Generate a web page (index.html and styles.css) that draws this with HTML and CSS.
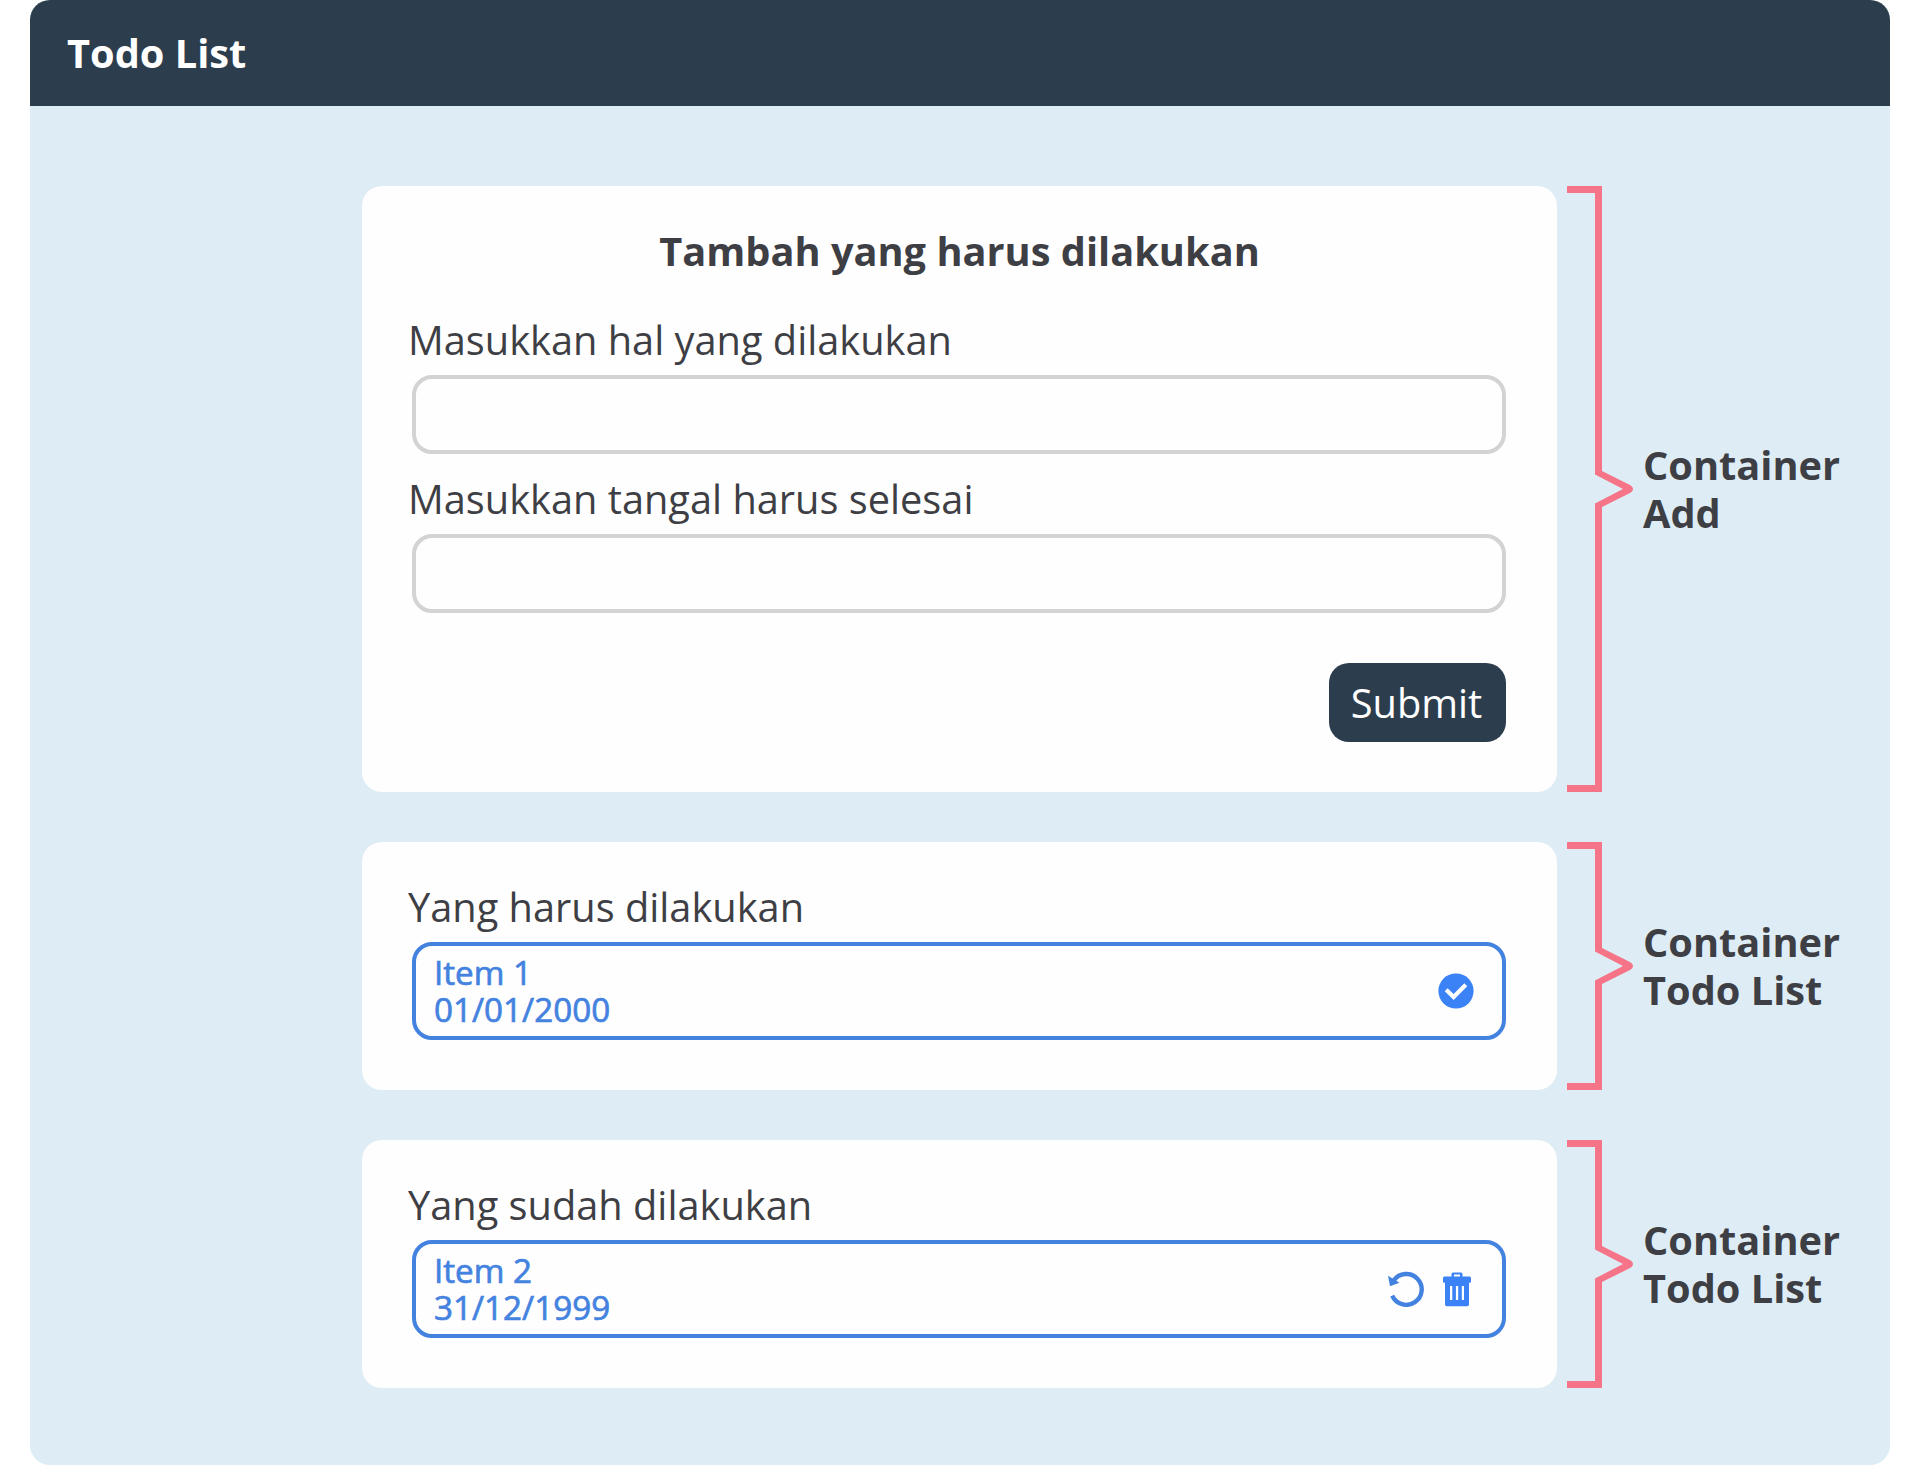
FILE: index.html
```html
<!DOCTYPE html>
<html lang="id">
  <head>
    <meta charset="UTF-8" />
    <meta name="viewport" content="width=device-width, initial-scale=1.0" />
    <title>Todo List</title>
    <link rel="stylesheet" href="styles.css">
  </head>
  <body>
    <div class="app">
      <header class="head_bar">
        <h1>Todo List</h1>
      </header>
      <main>
        <!-- container add -->
        <div class="row">
          <section class="card card_add">
            <h2>Tambah yang harus dilakukan</h2>
            <form id="form" class="form">
              <label for="title">Masukkan hal yang dilakukan</label>
              <input type="text" name="title" id="title" />
              <label for="date">Masukkan tangal harus selesai</label>
              <input type="text" name="date" id="date" />
              <button type="submit" class="submit">Submit</button>
            </form>
          </section>
          <div class="bracket">
            <div class="arm arm_top"></div>
            <svg class="tip" width="38" height="36" viewBox="0 0 38 36">
              <path d="M0 0H7L34 13.5Q38 15.5 38 18Q38 20.5 34 22.5L7 36H0V32.5L28 18L0 3.5Z" />
            </svg>
            <div class="arm arm_bottom"></div>
          </div>
          <p class="note">Container<br />Add</p>
        </div>

        <!-- container todo -->
        <div class="row">
          <section class="card">
            <h3>Yang harus dilakukan</h3>
            <div class="item">
              <div class="item_text">
                <p>Item 1</p>
                <p>01/01/2000</p>
              </div>
              <div class="item_icons">
                <svg class="icon_check" width="36" height="36" viewBox="0 0 36 36">
                  <circle cx="18" cy="18" r="17.6" fill="#3b82f6" />
                  <path d="M8.2 16.8L15.6 24L27.8 11.8" fill="none" stroke="#fff" stroke-width="4.2" />
                </svg>
              </div>
            </div>
          </section>
          <div class="bracket">
            <div class="arm arm_top"></div>
            <svg class="tip" width="38" height="36" viewBox="0 0 38 36">
              <path d="M0 0H7L34 13.5Q38 15.5 38 18Q38 20.5 34 22.5L7 36H0V32.5L28 18L0 3.5Z" />
            </svg>
            <div class="arm arm_bottom"></div>
          </div>
          <p class="note">Container<br />Todo List</p>
        </div>

        <!-- container completed -->
        <div class="row">
          <section class="card">
            <h3>Yang sudah dilakukan</h3>
            <div class="item">
              <div class="item_text">
                <p>Item 2</p>
                <p>31/12/1999</p>
              </div>
              <div class="item_icons">
                <svg class="icon_undo" width="36" height="36" viewBox="0 0 36 36">
                  <path d="M5.8 9.4A15.4 15.4 0 1 1 4.2 24.6" fill="none" stroke="#4482e0" stroke-width="4.4" />
                  <path d="M0 4.8L11.5 11.8L2 15.2Z" fill="#4482e0" />
                </svg>
                <svg class="icon_trash" width="28" height="36" viewBox="0 0 28 36">
                  <path
                    fill="#3b82f6"
                    fill-rule="evenodd"
                    d="M8.500 5.500V3A1.500 1.500 0 0 1 10 1.500H18A1.500 1.500 0 0 1 19.500 3V5.500H26.500A1.500 1.500 0 0 1 28 7V10.500A1.200 1.200 0 0 1 26.800 11.700H26V33.500A1.700 1.700 0 0 1 24.300 35.200H3.700A1.700 1.700 0 0 1 2 33.500V11.700H1.200A1.200 1.200 0 0 1 0 10.500V7A1.500 1.500 0 0 1 1.500 5.500ZM11 3.600V5.500H17V3.600ZM7 15H9.300V29H7ZM12.900 15H15.200V29H12.900ZM18.800 15H21V29H18.800Z"
                  />
                </svg>
              </div>
            </div>
          </section>
          <div class="bracket">
            <div class="arm arm_top"></div>
            <svg class="tip" width="38" height="36" viewBox="0 0 38 36">
              <path d="M0 0H7L34 13.5Q38 15.5 38 18Q38 20.5 34 22.5L7 36H0V32.5L28 18L0 3.5Z" />
            </svg>
            <div class="arm arm_bottom"></div>
          </div>
          <p class="note">Container<br />Todo List</p>
        </div>
      </main>
    </div>
  </body>
</html>
```
FILE: styles.css
```css
* {
  margin: 0;
  padding: 0;
  box-sizing: border-box;
}

body {
  background-color: #fff;
  color: #3e3f45;
  font-family: "Open Sans", sans-serif;
  font-size: 39.75px;
  line-height: 48px;
}

.app {
  width: 1860px;
  height: 1465px;
  margin: 0 auto;
  background-color: #deedf5;
  border-radius: 20px;
  overflow: hidden;
}

.head_bar {
  height: 106px;
  padding: 29px 37px;
  background-color: #2c3d4e;
  color: #fff;
}
.head_bar h1 {
  font-size: 39.75px;
  font-weight: 700;
}

main {
  display: flex;
  flex-direction: column;
  gap: 50px;
  padding: 80px 0 0 332px;
}

.row {
  display: flex;
  gap: 10px;
}

.card {
  width: 1195px;
  height: 248px;
  padding: 41px 46px 0;
  background-color: #fefefe;
  border-radius: 20px;
}
.card_add {
  height: 606px;
}
.card h2 {
  margin-bottom: 41px;
  font-size: 39.75px;
  font-weight: 700;
  text-align: center;
}
.card h3 {
  margin-bottom: 11px;
  font-size: 39.75px;
  font-weight: 400;
}

.form {
  display: flex;
  flex-direction: column;
}
.form label {
  margin-bottom: 11px;
}
.form input {
  height: 79px;
  margin: 0 5px 21px 4px;
  padding: 0 20px;
  border: 4px solid #d3d3d5;
  border-radius: 20px;
  background-color: #fefefe;
  font: inherit;
}
.submit {
  align-self: flex-end;
  width: 177px;
  height: 79px;
  margin: 29px 5px 0 0;
  padding-right: 2px;
  border: none;
  border-radius: 20px;
  background-color: #2c3d4e;
  color: #fff;
  font: inherit;
}

.item {
  display: flex;
  justify-content: space-between;
  align-items: center;
  height: 98px;
  margin: 0 5px 0 4px;
  padding: 0 31px 0 18px;
  border: 4px solid #4482e0;
  border-radius: 20px;
  color: #4482e0;
}
.item_text {
  font-size: 33.2px;
  line-height: 37px;
  -webkit-text-stroke: 0.7px #4482e0;
}
.item_icons {
  display: flex;
  align-items: center;
  gap: 19px;
}
.icon_check {
  margin-right: -3px;
}

/* bracket next to each card */
.bracket {
  display: flex;
  flex-direction: column;
  width: 66px;
}
.arm {
  flex: 1;
  width: 35px;
  border-right: 7px solid #f67487;
}
.arm_top {
  border-top: 7px solid #f67487;
}
.arm_bottom {
  border-bottom: 7px solid #f67487;
}
.tip {
  display: block;
  margin-left: 28px;
  fill: #f67487;
}

.note {
  align-self: center;
  font-weight: 700;
}
```
